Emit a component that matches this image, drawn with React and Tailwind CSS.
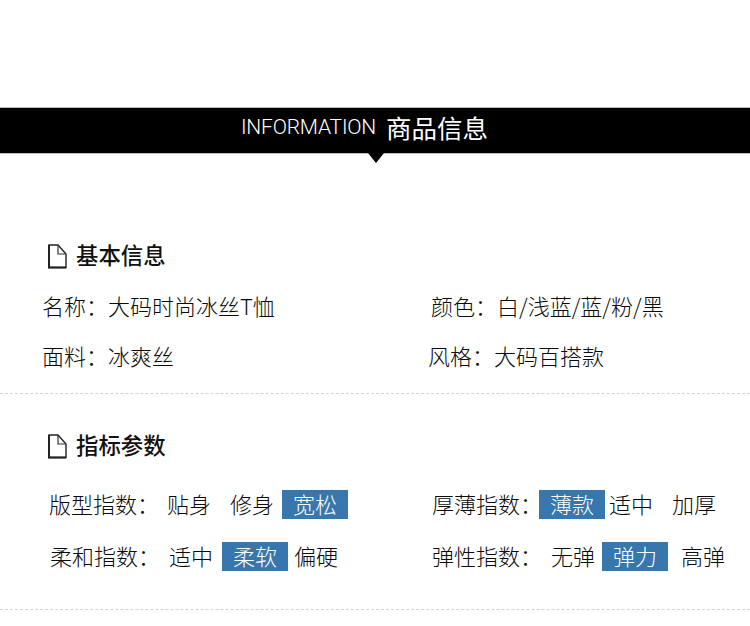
const cjk = "font-['Noto_Sans_CJK_SC','Noto_Sans',sans-serif]"

function DocIcon() {
  return (
    <svg width="20" height="25" viewBox="0 0 20 25" className="shrink-0" fill="none">
      <path d="M2 1H11L19 10V23.5H2Z" stroke="#222" strokeWidth="1.4" />
      <path d="M2 1V24" stroke="#222" strokeWidth="2" />
      <path d="M1 23.5H19" stroke="#222" strokeWidth="2" />
      <path d="M11 1V10H19" stroke="#333" strokeWidth="1.2" />
    </svg>
  )
}

function Heading({ children }) {
  return (
    <div className="flex items-center h-[26px] pl-[47px] gap-[9px]">
      <DocIcon />
      <span className="mb-[4px] text-[22.4px] leading-[26px] font-medium text-[#111]">{children}</span>
    </div>
  )
}

function Chip({ children, className }) {
  return (
    <span className={`w-[66px] h-[29px] mt-px pb-[2px] flex items-center justify-center bg-[#3777ad] text-white ${className}`}>
      {children}
    </span>
  )
}

function Opt({ children, className }) {
  return <span className={`w-[44px] whitespace-nowrap ${className}`}>{children}</span>
}

export default function App() {
  return (
    <div className={`w-[750px] h-[626px] overflow-hidden bg-white text-[22px] leading-[29px] text-[#0a0a0a] font-light ${cjk}`}>
      <div className="h-[107px]" />

      {/* title bar */}
      <div className="relative h-[47px] bg-black border-y border-[#bbb] flex items-center justify-center pr-[21px] pb-[6px] text-white">
        <span className="pr-[10px] text-[21px] tracking-[-0.2px] font-light font-['Roboto',sans-serif]">INFORMATION</span>
        <span className="mb-[3px] text-[25.5px] font-normal">商品信息</span>
        <svg width="16" height="10" viewBox="0 0 16 10" className="absolute left-[368px] top-[45px]">
          <path d="M0 0H16L8 10Z" fill="#000" />
        </svg>
      </div>

      {/* basic info */}
      <div className="pt-[89px] h-[240px] border-b border-dashed border-[#d4d4d4]">
        <Heading>基本信息</Heading>
        <div className="mt-[22px] flex h-[29px]">
          <div className="w-[430px] pl-[42px] whitespace-nowrap">名称：大码时尚冰丝T恤</div>
          <div className="whitespace-nowrap pl-[1px]">颜色：白/浅蓝/蓝/粉/黑</div>
        </div>
        <div className="mt-[21px] flex h-[29px]">
          <div className="w-[428px] pl-[42px] whitespace-nowrap">面料：冰爽丝</div>
          <div className="whitespace-nowrap">风格：大码百搭款</div>
        </div>
      </div>

      {/* indexes */}
      <div className="pt-[39px] h-[216px] border-b border-dashed border-[#d4d4d4]">
        <Heading>指标参数</Heading>
        <div className="mt-[30px] flex h-[29px]">
          <div className="w-[432px] pl-[49px] flex whitespace-nowrap">
            <span className="w-[118px]">版型指数：</span>
            <Opt>贴身</Opt>
            <Opt className="ml-[19px]">修身</Opt>
            <Chip className="ml-[8px]">宽松</Chip>
          </div>
          <div className="flex whitespace-nowrap">
            <span className="w-[107px]">厚薄指数：</span>
            <Chip>薄款</Chip>
            <Opt className="ml-[4px]">适中</Opt>
            <Opt className="ml-[19px]">加厚</Opt>
          </div>
        </div>
        <div className="mt-[23px] flex h-[29px]">
          <div className="w-[432px] pl-[50px] flex whitespace-nowrap">
            <span className="w-[119px]">柔和指数：</span>
            <Opt>适中</Opt>
            <Chip className="ml-[9px]">柔软</Chip>
            <Opt className="ml-[6px]">偏硬</Opt>
          </div>
          <div className="flex whitespace-nowrap">
            <span className="w-[119px]">弹性指数：</span>
            <Opt>无弹</Opt>
            <Chip className="ml-[7px]">弹力</Chip>
            <Opt className="ml-[13px]">高弹</Opt>
          </div>
        </div>
      </div>
    </div>
  )
}
